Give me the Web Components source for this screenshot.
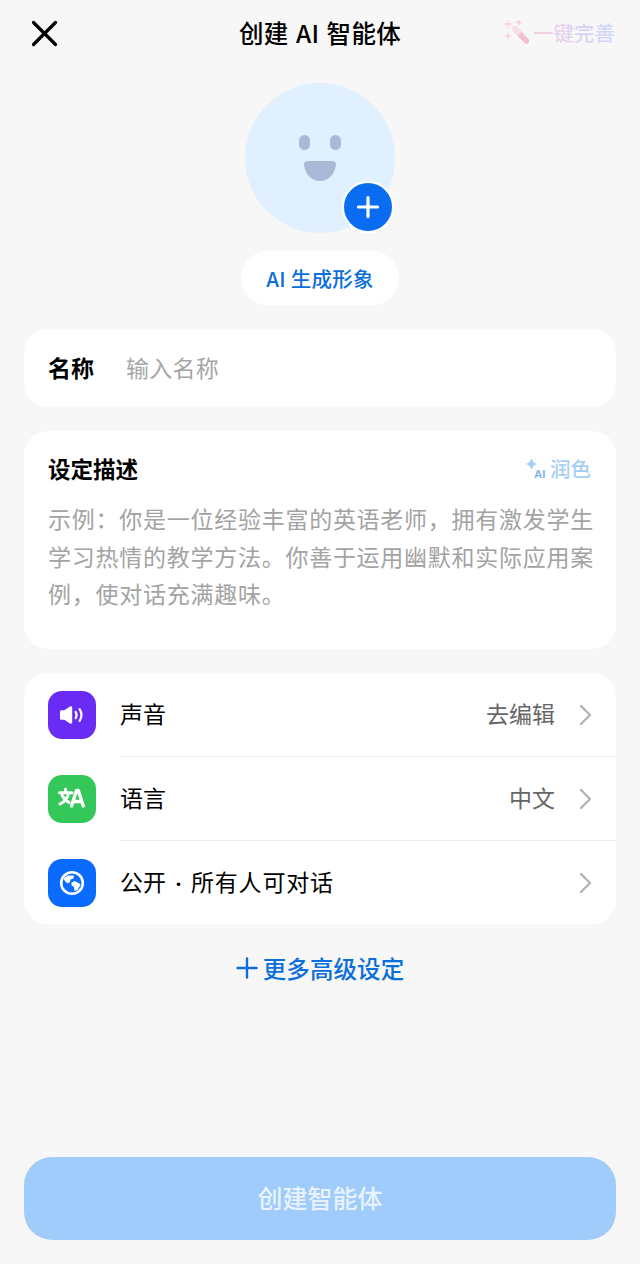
<!DOCTYPE html>
<html lang="zh">
<head>
<meta charset="utf-8">
<title>创建 AI 智能体</title>
<style>
	html, body { margin: 0; padding: 0; background: #f7f7f7; }
	body { font-family: "Noto Sans CJK SC", "Noto Sans", sans-serif; color: #000; }
</style>
</head>
<body>
<create-page>
	<top-bar slot="top" title-text="创建 AI 智能体" action="一键完善"></top-bar>
	<avatar-picker slot="top"></avatar-picker>
	<name-card></name-card>
	<desc-card>示例：你是一位经验丰富的英语老师，拥有激发学生学习热情的教学方法。你善于运用幽默和实际应用案例，使对话充满趣味。</desc-card>
	<settings-card>
		<setting-row label="声音" value="去编辑">
			<svg slot="icon" viewBox="0 0 48 48" width="48" height="48">
				<rect width="48" height="48" rx="14" fill="#6a2cf5"/>
				<path d="M12 20.800c0-.9.7-1.600 1.600-1.600h2.800l5.600-3.700c1-.6 2.200.1 2.200 1.200v14.600c0 1.100-1.200 1.800-2.200 1.200l-5.600-3.700h-2.800c-.9 0-1.600-.7-1.600-1.600z" fill="#fff"/>
				<path d="M27.600 20.800c1.300 2 1.300 4.400 0 6.400" fill="none" stroke="#fff" stroke-width="2.200" stroke-linecap="round"/>
				<path d="M31.600 18.200c2.300 3.600 2.300 8 0 11.600" fill="none" stroke="#fff" stroke-width="2.200" stroke-linecap="round"/>
			</svg>
		</setting-row>
		<setting-row label="语言" value="中文">
			<svg slot="icon" viewBox="0 0 48 48" width="48" height="48">
				<rect width="48" height="48" rx="14" fill="#34c759"/>
				<path d="M11.500 17.800h12.500M17.500 14v3.800M20.800 17.800c-1 5.200-4 9-8.800 11.200M14 20c1.400 3.200 3.800 5.800 7 7.400" fill="none" stroke="#fff" stroke-width="3" stroke-linecap="round" stroke-linejoin="round"/>
				<path d="M23.500 31l5-15.500h1.800l5 15.500M25.800 26.500h7" fill="none" stroke="#fff" stroke-width="3.400" stroke-linecap="round" stroke-linejoin="round"/>
			</svg>
		</setting-row>
		<setting-row label="公开" extra="所有人可对话" last>
			<svg slot="icon" viewBox="0 0 48 48" width="48" height="48">
				<rect width="48" height="48" rx="14" fill="#0a6cff"/>
				<circle cx="24" cy="24" r="10.800" fill="none" stroke="#fff" stroke-width="2.600"/>
				<path d="M15.500 19.500l4-3h6.500l-.5 3-3 1-.5 2.500-2.500 1.500-2.500-2.500z" fill="#fff"/>
				<path d="M23.500 23.500l3-1.500 5 2.500 1 1.500-3 5-3 1-.5-4-2.500-1.500z" fill="#fff"/>
			</svg>
		</setting-row>
	</settings-card>
	<more-link>更多高级设定</more-link>
	<submit-button slot="bottom">创建智能体</submit-button>
</create-page>

<script>
	customElements.define('create-page', class extends HTMLElement {
		constructor() {
			super();
			this.attachShadow({ mode: 'open' }).innerHTML = `
				<style>
					:host {
						display: flex;
						flex-direction: column;
						height: 1264px;
						box-sizing: border-box;
						background: #f7f7f7;
						overflow: hidden;
					}
					.content {
						display: flex;
						flex-direction: column;
						gap: 24px;
						padding: 0 24px;
					}
					.bottom {
						margin-top: auto;
						padding: 0 24px 24px;
					}
				</style>
				<slot name="top"></slot>
				<div class="content"><slot></slot></div>
				<div class="bottom"><slot name="bottom"></slot></div>
			`;
		}
	});

	customElements.define('top-bar', class extends HTMLElement {
		constructor() {
			super();
			this.attachShadow({ mode: 'open' }).innerHTML = `
				<style>
					:host {
						display: flex;
						align-items: center;
						justify-content: space-between;
						height: 66px;
						padding: 0 25px 0 31px;
						position: relative;
					}
					.close { display: block; width: 27px; height: 27px; }
					.title {
						position: absolute;
						left: 0;
						right: 0;
						text-align: center;
						font-size: 24.500px;
						font-weight: 500;
						line-height: 64px;
						letter-spacing: .3px;
						word-spacing: 1.500px;
						white-space: pre;
					}
					.action {
						display: flex;
						align-items: center;
						gap: 4px;
						padding-bottom: 2px;
						opacity: .45;
						font-size: 20.500px;
						font-weight: 500;
						white-space: nowrap;
					}
					.action span {
						background: linear-gradient(90deg, #f3a2c4, #b9a2f3 60%, #9fb4f8);
						-webkit-background-clip: text;
						background-clip: text;
						color: transparent;
					}
				</style>
				<svg class="close" viewBox="0 0 27 27"><path d="M2.500 2.500l22 22M24.500 2.500l-22 22" stroke="#000" stroke-width="3.200" stroke-linecap="round" fill="none"/></svg>
				<div class="title"></div>
				<div class="action">
					<svg width="25" height="25" viewBox="0 0 25 25">
						<path d="M11.500 9.500l11 11.500" stroke="#ef7ba6" stroke-width="5.500" stroke-linecap="round"/>
						<path d="M10.500 8.500l3.500 3.500" stroke="#f8c6d8" stroke-width="5.500" stroke-linecap="round"/>
						<path d="M4 1v6M1 4h6M15 0v5M12.500 2.500h5M4 13.500v5M1.500 16h5" stroke="#f3aaa0" stroke-width="1.400" stroke-linecap="round"/>
					</svg>
					<span></span>
				</div>
			`;
			this.shadowRoot.querySelector('.title').textContent = this.getAttribute('title-text');
			this.shadowRoot.querySelector('.action span').textContent = this.getAttribute('action');
		}
	});

	customElements.define('avatar-picker', class extends HTMLElement {
		constructor() {
			super();
			this.attachShadow({ mode: 'open' }).innerHTML = `
				<style>
					:host {
						display: flex;
						flex-direction: column;
						align-items: center;
						padding-top: 17px;
						margin-bottom: 24px;
					}
					.avatar {
						position: relative;
						width: 150px;
						height: 150px;
						border-radius: 50%;
						background: #e0f0ff;
					}
					.avatar svg.face { display: block; }
					.badge {
						position: absolute;
						left: 97px;
						top: 98px;
						width: 52px;
						height: 52px;
						box-sizing: border-box;
						border: 2px solid #fff;
						border-radius: 50%;
						background: #0a6cf0;
					}
					.badge svg { display: block; }
					.pill {
						margin-top: 18px;
						width: 158px;
						height: 54px;
						border-radius: 27px;
						background: #fff;
						color: #0a6edb;
						font-size: 20.500px;
						font-weight: 500;
						line-height: 54px;
						letter-spacing: .25px;
						text-align: center;
						white-space: pre;
					}
				</style>
				<div class="avatar">
					<svg class="face" width="150" height="150" viewBox="0 0 150 150">
						<rect x="54" y="52" width="11" height="15" rx="5.500" fill="#a8bad8"/>
						<rect x="85" y="52" width="11" height="15" rx="5.500" fill="#a8bad8"/>
						<path d="M64 78h22c3.500 0 5.500 1.500 5 4-1.500 9-7 16-16 16s-14.500-7-16-16c-.5-2.500 1.500-4 5-4z" fill="#a8bad8"/>
					</svg>
					<div class="badge">
						<svg width="48" height="48" viewBox="0 0 48 48"><path d="M24 14.500v19M14.500 24h19" stroke="#fff" stroke-width="3.200" stroke-linecap="round"/></svg>
					</div>
				</div>
				<div class="pill">AI 生成形象</div>
			`;
		}
	});

	customElements.define('name-card', class extends HTMLElement {
		constructor() {
			super();
			this.attachShadow({ mode: 'open' }).innerHTML = `
				<style>
					:host {
						display: flex;
						align-items: center;
						gap: 32px;
						height: 78px;
						padding: 0 24px 3px;
						box-sizing: border-box;
						border-radius: 24px;
						background: #fff;
						font-size: 23px;
					}
					.label { font-weight: 700; }
					.hint { color: #a6a6a6; letter-spacing: .25px; }
				</style>
				<span class="label">名称</span>
				<span class="hint">输入名称</span>
			`;
		}
	});

	customElements.define('desc-card', class extends HTMLElement {
		constructor() {
			super();
			this.attachShadow({ mode: 'open' }).innerHTML = `
				<style>
					:host {
						display: block;
						box-sizing: border-box;
						height: 218px;
						padding: 19px 24px 0;
						border-radius: 24px;
						background: #fff;
					}
					.head {
						display: flex;
						align-items: center;
						justify-content: space-between;
						height: 36px;
					}
					.head b { font-size: 22.500px; font-weight: 700; }
					.polish {
						display: flex;
						align-items: center;
						gap: 3px;
						margin-right: 1px;
						color: #a5cff5;
						font-size: 20.500px;
						font-weight: 500;
					}
					.text {
						margin-top: 14px;
						color: #a3a3a3;
						font-size: 23px;
						line-height: 37.500px;
						letter-spacing: .74px;
						margin-right: -10px;
					}
				</style>
				<div class="head">
					<b>设定描述</b>
					<span class="polish">
						<svg width="24" height="24" viewBox="0 0 24 24">
							<path d="M8.500 1.500c.8 4 2.500 5.700 6.500 6.500-4 .8-5.700 2.500-6.500 6.500C7.700 10.500 6 8.800 2 8c4-.8 5.700-2.500 6.500-6.500z" fill="#a5cff5"/>
							<text x="11" y="21.500" font-family="Liberation Sans, sans-serif" font-size="11.500" font-weight="700" fill="#7fb6ee">AI</text>
						</svg>
						润色
					</span>
				</div>
				<div class="text"><slot></slot></div>
			`;
		}
	});

	customElements.define('settings-card', class extends HTMLElement {
		constructor() {
			super();
			this.attachShadow({ mode: 'open' }).innerHTML = `
				<style>
					:host {
						display: block;
						border-radius: 24px;
						background: #fff;
						overflow: hidden;
					}
				</style>
				<slot></slot>
			`;
		}
	});

	customElements.define('setting-row', class extends HTMLElement {
		constructor() {
			super();
			this.attachShadow({ mode: 'open' }).innerHTML = `
				<style>
					:host {
						display: flex;
						align-items: center;
						height: 84px;
						padding-left: 24px;
					}
					:host([last]) { height: 83px; }
					.icon { flex: none; width: 48px; height: 48px; margin-right: 24px; }
					.icon ::slotted(svg) { display: block; }
					.main {
						flex: 1;
						align-self: stretch;
						display: flex;
						align-items: center;
						box-sizing: border-box;
						padding: 0 24px 3px 0;
						border-bottom: 1px solid #ededed;
						font-size: 23px;
					}
					:host([last]) .main { border-bottom: 0; }
					.label { flex: 1; white-space: nowrap; }
					.dot { display: inline-block; width: 25px; font-size: 17px; text-align: center; }
					.extra { letter-spacing: .8px; }
					.value { color: #666; margin-right: 24px; }
					svg.chev { display: block; margin-top: 3px; }
				</style>
				<div class="icon"><slot name="icon"></slot></div>
				<div class="main">
					<span class="label"></span>
					<span class="value"></span>
					<svg class="chev" width="13" height="22" viewBox="0 0 13 22"><path d="M2 2l9 9-9 9" fill="none" stroke="#b3b3b3" stroke-width="2.400" stroke-linecap="round" stroke-linejoin="round"/></svg>
				</div>
			`;
			const label = this.shadowRoot.querySelector('.label');
			label.textContent = this.getAttribute('label');
			if (this.hasAttribute('extra')) {
				const dot = document.createElement('span');
				dot.className = 'dot';
				dot.textContent = '·';
				const extra = document.createElement('span');
				extra.className = 'extra';
				extra.textContent = this.getAttribute('extra');
				label.append(dot, extra);
			}
			this.shadowRoot.querySelector('.value').textContent = this.getAttribute('value') || '';
		}
	});

	customElements.define('more-link', class extends HTMLElement {
		constructor() {
			super();
			this.attachShadow({ mode: 'open' }).innerHTML = `
				<style>
					:host {
						display: flex;
						align-items: center;
						justify-content: center;
						gap: 5px;
						height: 42px;
						margin-top: -1px;
						color: #0a6edb;
						font-size: 23.500px;
						font-weight: 500;
						letter-spacing: .1px;
					}
					svg { display: block; }
				</style>
				<svg width="22" height="22" viewBox="0 0 22 22"><path d="M11 1.500v19M1.500 11h19" stroke="#0a6edb" stroke-width="2.400" stroke-linecap="round"/></svg>
				<slot></slot>
			`;
		}
	});

	customElements.define('submit-button', class extends HTMLElement {
		constructor() {
			super();
			this.attachShadow({ mode: 'open' }).innerHTML = `
				<style>
					:host {
						display: block;
						height: 83px;
						border-radius: 28px;
						background: #a0ccfb;
						color: #e8f3ff;
						font-size: 25px;
						font-weight: 500;
						line-height: 81px;
						text-align: center;
					}
				</style>
				<slot></slot>
			`;
		}
	});
</script>
</body>
</html>
